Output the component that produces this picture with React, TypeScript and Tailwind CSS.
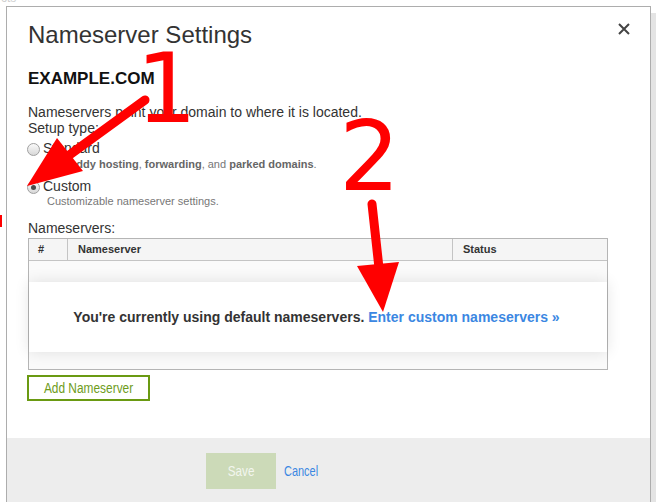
import React from "react";

function Radio({ checked }: { checked?: boolean }) {
  return (
    <div className="mt-[3px] ml-[-1px] flex h-[13px] w-[13px] shrink-0 items-center justify-center rounded-full border border-[#a0a0a0] bg-gradient-to-b from-[#fafafa] to-[#d8d8d8]">
      {checked ? <div className="h-[5px] w-[5px] rounded-full bg-[#4a4a4a]" /> : null}
    </div>
  );
}

export default function App() {
  return (
    <div className="relative h-[502px] w-[656px] overflow-hidden bg-white font-['Liberation_Sans',Arial,sans-serif]">
      <div className="flex h-full flex-col">
        <div className="h-[6px] shrink-0 overflow-hidden pl-[1px]">
          <div className="mt-[-9px] text-[12px] leading-[14px] text-[#d0d0d0]">cts</div>
        </div>
        <div className="flex flex-1">
          <div className="flex w-[6px] shrink-0 flex-col">
            <div className="h-[209px]" />
            <div className="h-[12px] w-[2px] bg-[#ff0000]" />
          </div>
          <div className="flex w-[645px] shrink-0 flex-col border border-[#adadad] bg-white">
            <div className="flex h-[431px] shrink-0 flex-col pl-[21px] pt-[14px] text-[#333]">
              <div className="flex h-[28px] items-start justify-between pr-[20px]">
                <div className="text-[24px] leading-[28px] text-[#333]">Nameserver Settings</div>
                <svg className="mt-[2px]" width="12" height="12" viewBox="0 0 12 12">
                  <path d="M1 1 L11 11 M11 1 L1 11" stroke="#444" strokeWidth="2" />
                </svg>
              </div>
              <div className="mt-[20px] text-[17px] font-bold leading-[20px] text-[#111]">EXAMPLE.COM</div>
              <div className="mt-[15px] text-[14px] leading-[16px]">Nameservers point your domain to where it is located.</div>
              <div className="text-[14px] leading-[16px]">Setup type:</div>
              <div className="mt-[4px] flex gap-[3px]">
                <Radio />
                <div className="text-[14px] leading-[16px]">Standard</div>
              </div>
              <div className="ml-[19px] mt-[2px] text-[11px] leading-[13px] text-[#777]">
                <span className="font-bold text-[#666]">GoDaddy hosting</span>, <span className="font-bold text-[#666]">forwarding</span>, and <span className="font-bold text-[#666]">parked domains</span>.
              </div>
              <div className="mt-[7px] flex gap-[3px]">
                <Radio checked />
                <div className="text-[14px] leading-[16px]">Custom</div>
              </div>
              <div className="ml-[19px] mt-[1px] text-[11px] leading-[13px] text-[#777]">Customizable nameserver settings.</div>
              <div className="mt-[12px] text-[14px] leading-[16px]">Nameservers:</div>
              <div className="mt-[2px] w-[580px] border border-[#b5b5b5]">
                <div className="flex h-[22px] border-b border-[#c4c4c4] bg-[#f5f5f5] text-[11px] font-bold leading-[21px] text-[#333]">
                  <div className="w-[39px] border-r border-[#c4c4c4] pl-[9px]">#</div>
                  <div className="w-[385px] border-r border-[#c4c4c4] pl-[10px]">Nameserver</div>
                  <div className="flex-1 pl-[10px]">Status</div>
                </div>
                <div className="bg-[#fafafa] pb-[17px] pt-[21px]">
                  <div className="flex h-[70px] items-center justify-center bg-white pr-[3px] text-[14px] font-bold leading-[16px] text-[#333] shadow-[0_0_14px_rgba(0,0,0,0.11)]">
                    <span>You're currently using default nameservers.&nbsp;</span>
                    <span className="text-[#3b87e2]">Enter custom nameservers »</span>
                  </div>
                </div>
              </div>
              <div className="ml-[-1px] mt-[5px] flex h-[26px] w-[123px] items-center justify-center border-2 border-[#6a9a12] text-[14px] leading-[16px] text-[#6e9c1c]">
                <span className="inline-block scale-x-[0.85] whitespace-nowrap">Add Nameserver</span>
              </div>
            </div>
            <div className="flex h-[80px] shrink-0 items-start bg-[#ededed] pl-[199px] pt-[15px]">
              <div className="flex h-[36px] w-[70px] items-center justify-center bg-[#ccdab8] text-[15px] leading-[16px] text-[#f3f6ef]">
                <span className="inline-block scale-x-[0.78]">Save</span>
              </div>
              <div className="ml-[8px] flex h-[36px] items-center text-[15px] leading-[16px] text-[#3b87e2]">
                <span className="inline-block origin-left scale-x-[0.73]">Cancel</span>
              </div>
            </div>
          </div>
          <div className="flex flex-1 flex-col">
            <div className="h-[7px] bg-white" />
            <div className="flex-1 bg-[#e4e4e4]" />
          </div>
        </div>
      </div>
      <svg className="pointer-events-none absolute left-0 top-0" width="656" height="502" viewBox="0 0 656 502">
        <text x="136" y="122" fontFamily="DejaVu Sans" fontSize="96" fill="#ff0000">1</text>
        <text x="339" y="190" fontFamily="DejaVu Sans" fontSize="96" fill="#ff0000">2</text>
        <line x1="145" y1="100" x2="68" y2="156" stroke="#ff0000" strokeWidth="9" strokeLinecap="round" />
        <polygon points="27,186 57,138 83,171" fill="#ff0000" />
        <line x1="372" y1="204" x2="379" y2="268" stroke="#ff0000" strokeWidth="9" strokeLinecap="round" />
        <polygon points="383,312 357,266 399,262" fill="#ff0000" />
      </svg>
    </div>
  );
}
